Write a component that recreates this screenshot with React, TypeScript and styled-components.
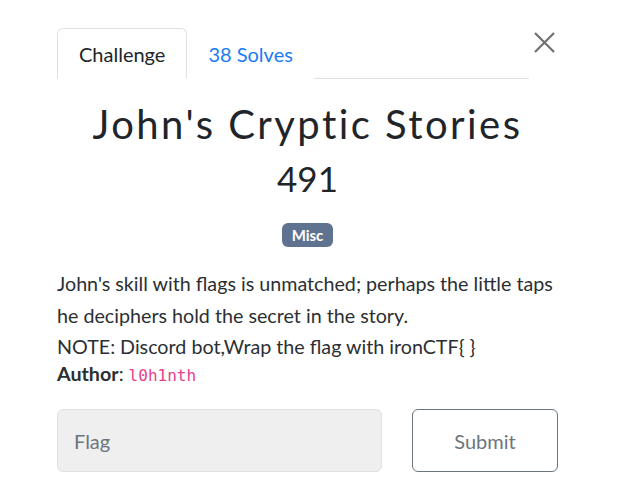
import React from "react";
import styled, { createGlobalStyle } from "styled-components";

const Global = createGlobalStyle`
  html, body { margin: 0; padding: 0; background: #fff; }
  body { font-family: Lato, "Noto Sans", sans-serif; color: #212529; }
  * { box-sizing: border-box; }
`;

const Modal = styled.div`
  width: 617px;
  height: 503px;
  padding: 28px 59px 0 57px;
  display: flex;
  flex-direction: column;
`;

const Header = styled.div`
  display: flex;
  align-items: flex-start;
`;

const Tabs = styled.ul`
  list-style: none;
  margin: 0;
  padding: 0;
  display: flex;
  flex: 1;
  border-bottom: 1px solid #dee2e6;
`;

const Tab = styled.li<{ $active?: boolean }>`
  margin-bottom: -1px;
  padding: 0 ${(p) => (p.$active ? 21 : 20)}px;
  height: 51px;
  display: flex;
  align-items: center;
  font-size: 20px;
  border: 1px solid ${(p) => (p.$active ? "#dee2e6" : "transparent")};
  border-bottom-color: ${(p) => (p.$active ? "#fff" : "transparent")};
  border-radius: 6px 6px 0 0;
  color: ${(p) => (p.$active ? "#212529" : "#1a7cf5")};
  background: #fff;
`;

const Close = styled.button`
  border: none;
  background: none;
  padding: 0;
  margin: 0 0 0 1px;
  width: 28px;
  height: 28px;
  display: flex;
  align-items: center;
  justify-content: center;
  cursor: pointer;
`;

const Title = styled.h2`
  margin: 21px 0 0;
  text-align: center;
  font-weight: 400;
  font-size: 40px;
  letter-spacing: 2.45px;
  line-height: 48px;
  color: #212529;
`;

const Points = styled.h3`
  margin: 9px 0 0;
  text-align: center;
  font-weight: 400;
  font-size: 35px;
  line-height: 42px;
  color: #212529;
`;

const TagRow = styled.div`
  display: flex;
  justify-content: center;
  margin-top: 24px;
`;

const Badge = styled.span`
  background: #5f7391;
  color: #fff;
  font-weight: 700;
  font-size: 15px;
  padding: 4px 10px 4px;
  border-radius: 6px;
  line-height: 16px;
`;

const Description = styled.div`
  margin-top: 21px;
  font-size: 19.7px;
  color: #2b2f33;
`;

const Para = styled.p<{ $lh: number }>`
  margin: 0;
  line-height: ${(p) => p.$lh}px;
`;

const Code = styled.code`
  font-family: "DejaVu Sans Mono", monospace;
  font-size: 16px;
  color: #e83e8c;
`;

const Form = styled.div`
  display: grid;
  grid-template-columns: 325px 146px;
  justify-content: space-between;
  margin-top: 22px;
`;

const Input = styled.input`
  height: 63px;
  border: 1px solid #dee2e6;
  background: #efefef;
  border-radius: 6px;
  padding: 0 16px;
  font-family: Lato, sans-serif;
  font-size: 20px;
  color: #495057;
  &::placeholder { color: #6c757d; }
`;

const Submit = styled.button`
  height: 63px;
  border: 1px solid #6c757d;
  background: #fff;
  border-radius: 6px;
  font-family: Lato, sans-serif;
  font-size: 20px;
  color: #6c757d;
`;

export default function App() {
  return (
    <>
      <Global />
      <Modal>
        <Header>
          <Tabs>
            <Tab $active>Challenge</Tab>
            <Tab>38 Solves</Tab>
          </Tabs>
          <Close aria-label="Close">
            <svg width="21" height="21" viewBox="0 0 21 21">
              <path d="M1 1L20 20M20 1L1 20" stroke="#707070" strokeWidth="2.2" />
            </svg>
          </Close>
        </Header>
        <Title>John's Cryptic Stories</Title>
        <Points>491</Points>
        <TagRow>
          <Badge>Misc</Badge>
        </TagRow>
        <Description>
          <Para $lh={31.5}>
            John's skill with flags is unmatched; perhaps the little taps he deciphers hold the secret in the story.
            <br />
            NOTE: Discord bot,Wrap the flag with ironCTF{"{ }"}
          </Para>
          <Para $lh={22.5}>
            <strong>Author</strong>: <Code>l0h1nth</Code>
          </Para>
        </Description>
        <Form>
          <Input placeholder="Flag" />
          <Submit>Submit</Submit>
        </Form>
      </Modal>
    </>
  );
}
